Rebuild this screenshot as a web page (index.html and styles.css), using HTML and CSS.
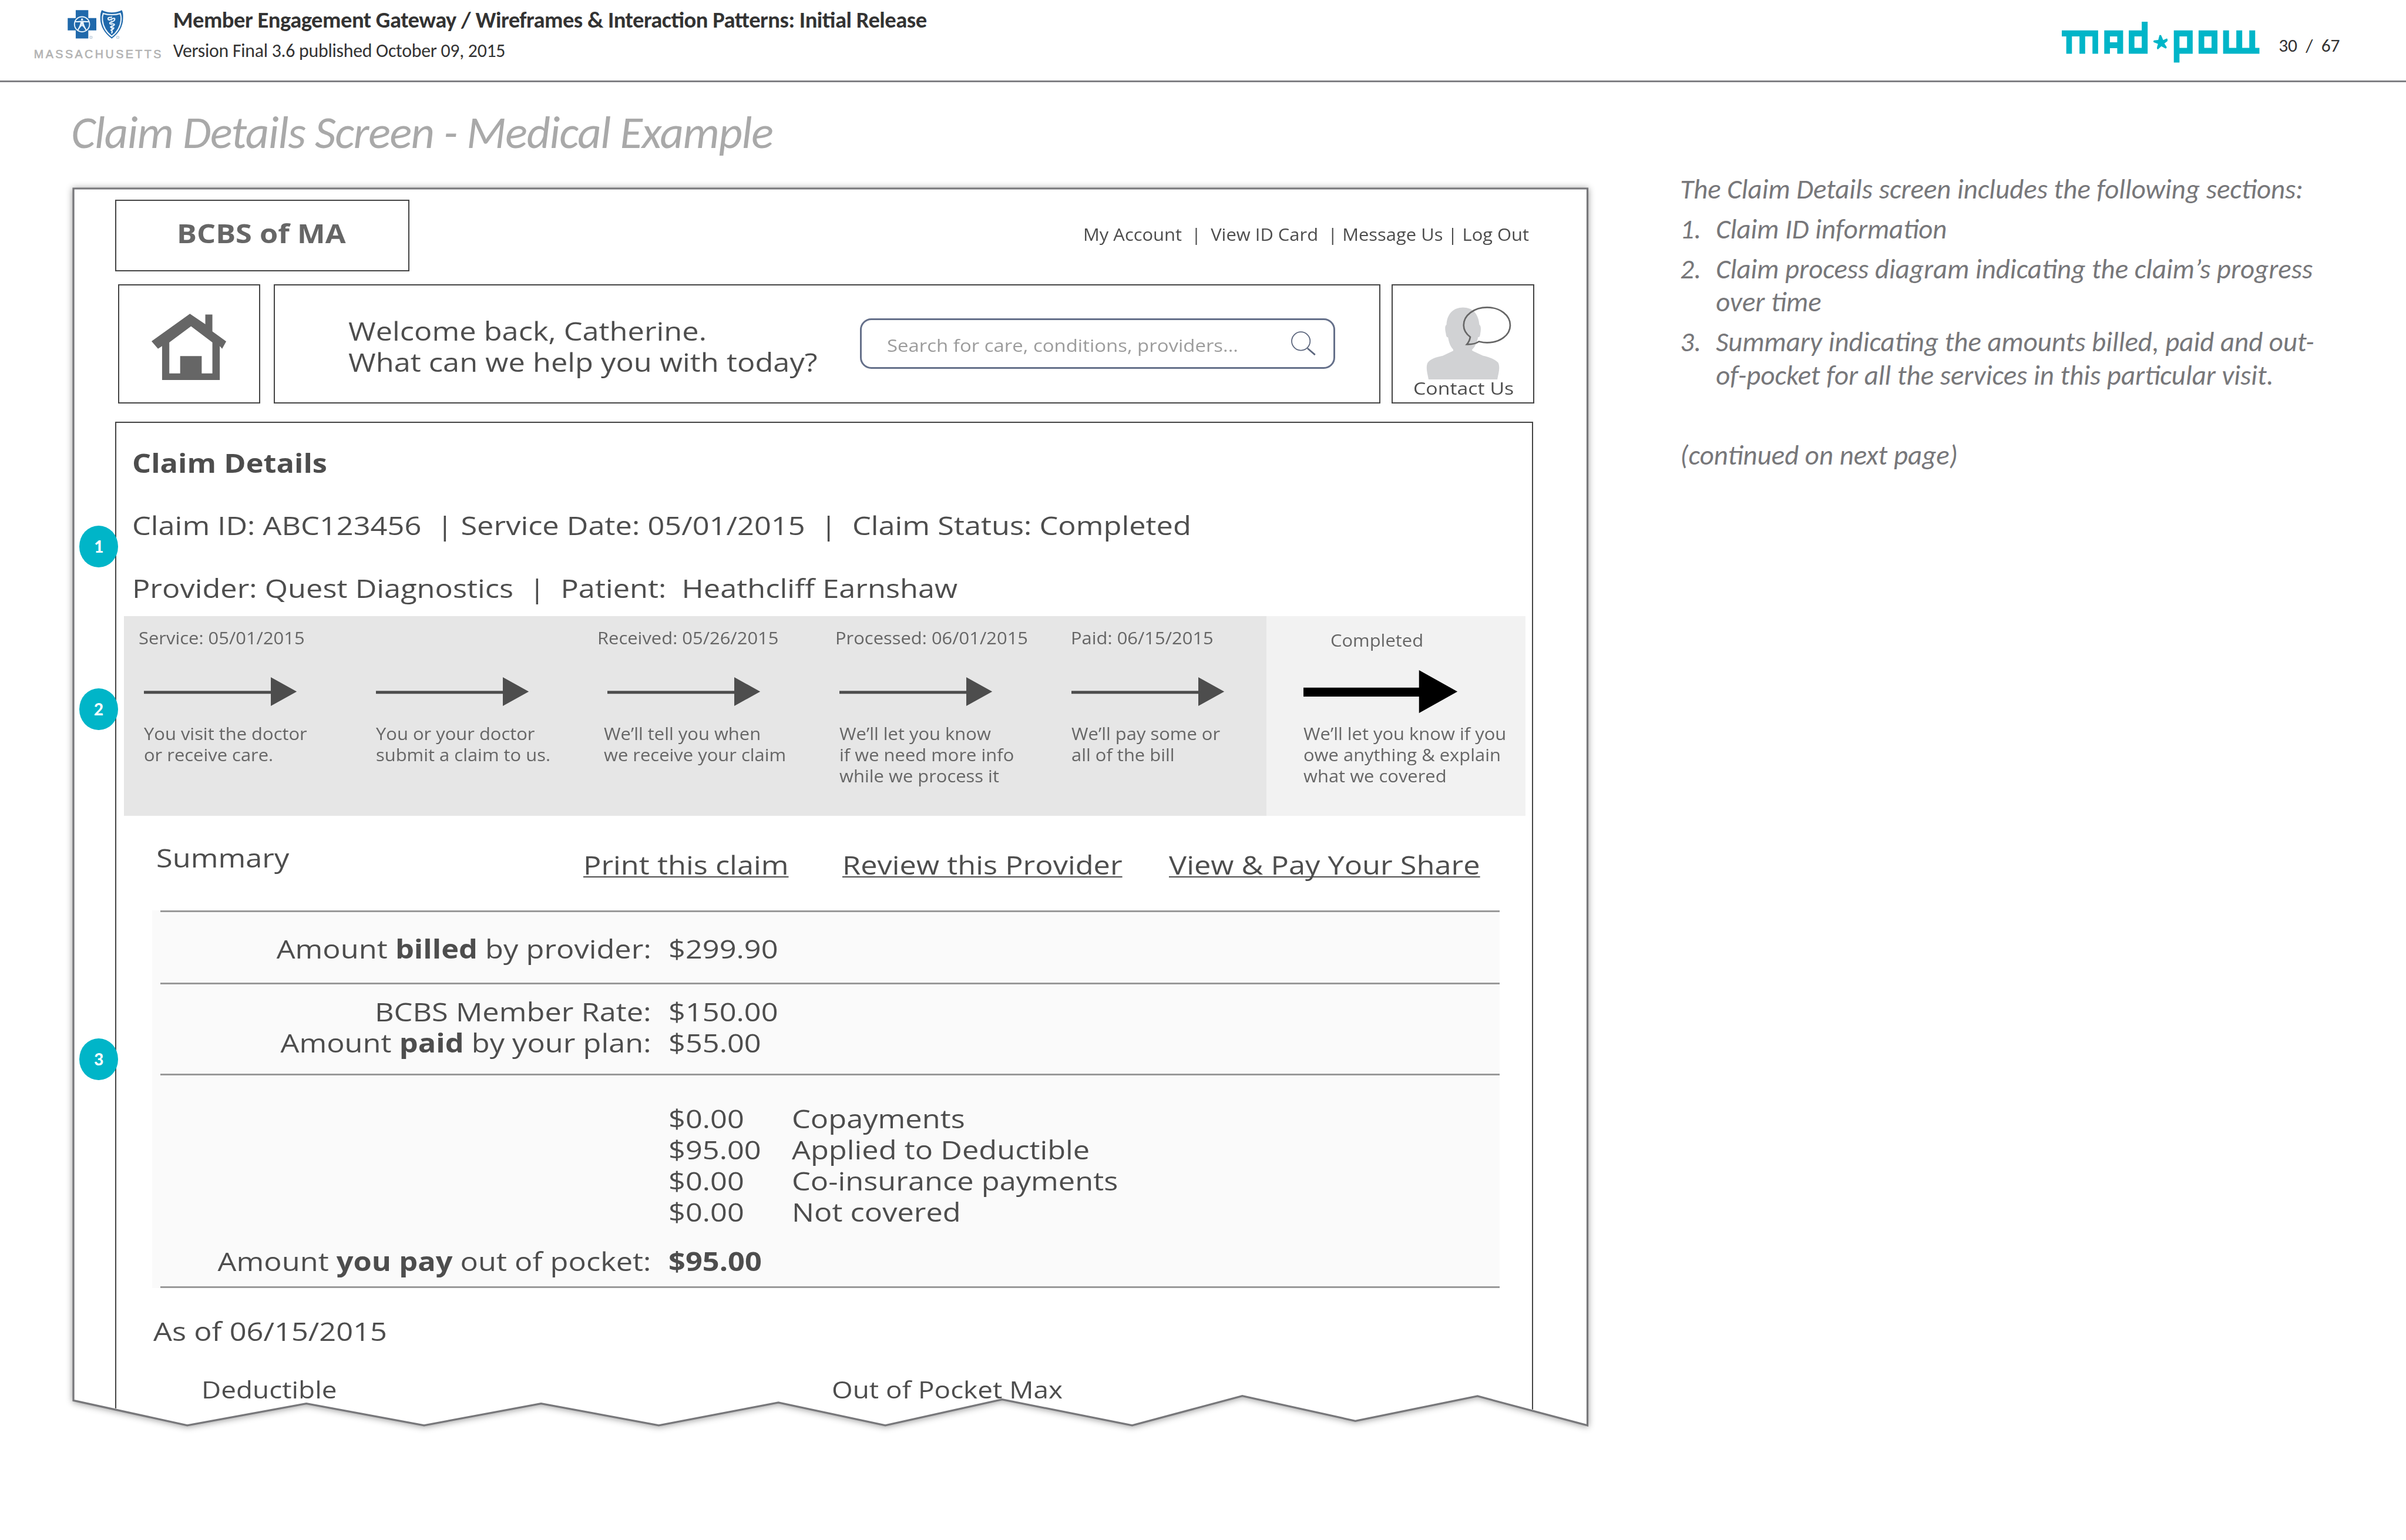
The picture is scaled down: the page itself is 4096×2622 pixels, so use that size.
FILE: index.html
```html
<!DOCTYPE html>
<html lang="en">
<head>
<meta charset="utf-8">
<title>Claim Details Screen - Medical Example</title>
<link rel="stylesheet" href="styles.css">
</head>
<body>
<header class="doc-header">
  <div class="brand">
    <svg class="brand-mark" viewBox="0 0 372 184" aria-label="Blue Cross Blue Shield">
      <path fill="#2069ab" d="M52 1h80v50h51v79h-51v51H52v-51H1V51h51z"/>
      <circle cx="92" cy="91" r="48" fill="none" stroke="#e9f3fa" stroke-width="7"/>
      <path fill="none" stroke="#e9f3fa" stroke-width="8" d="M46 74Q68 76 83 73H101Q116 76 138 74M86 74Q86 98 64 130M98 74Q98 98 120 130M76 112Q92 84 108 112"/>
      <path fill="#e9f3fa" d="M84 72h16l2 26-10-5-10 5z"/>
      <circle cx="92" cy="60" r="7" fill="#e9f3fa"/>
      <path fill="#2069ab" d="M218 1Q246 16 281 16T345 1Q355 14 353 55 351 130 281 182 211 130 208 55 208 14 218 1Z"/>
      <path fill="none" stroke="#e9f3fa" stroke-width="8" d="M227 22Q250 30 281 30T335 22Q343 42 340 67 334 128 281 168 228 128 222 67 219 42 227 22Z"/>
      <path fill="none" stroke="#e9f3fa" stroke-width="8" stroke-linecap="round" stroke-linejoin="round" d="M277 47Q254 45 258 59 264 67 277 60 297 48 300 56 302 70 279 76 262 82 272 89 296 86 298 93 292 103 274 107 272 114 294 114 290 124 276 128 290 136 281 146"/>
      <path fill="none" stroke="#e9f3fa" stroke-width="3" d="M281 38V150"/>
      <path fill="none" stroke="#9db4c8" stroke-width="3" d="M142 168h14v12h-14zM313 168h14v12h-14z"/>
    </svg>
    <div class="brand-state">MASSACHUSETTS</div>
  </div>
  <div class="doc-info">
    <div class="doc-name">Member Engagement Gateway / Wireframes &amp; Interaction Patterns: Initial Release</div>
    <div class="doc-version">Version Final 3.6 published October 09, 2015</div>
  </div>
  <svg class="agency-logo" viewBox="0 0 420 87" aria-label="mad pow" fill="#00b5c8">
    <path d="M0 18.500h77v49.500h-12V31H49.500v37h-12V31H21.500v37H9.500V31H0z"/>
    <path fill-rule="evenodd" d="M90 18.500h40V68h-12.500V56h-15.500v12H90zM102 31v12.500h15.500V31z"/>
    <path fill-rule="evenodd" d="M142 18.500h27.500V0h12.500v68h-40zM154 31v24.500h15.500V31z"/>
    <path d="M207 28.500Q209.500 27 211 29.500L215 39 222.500 35.500Q225 36 224 41L217.500 46 222.500 54Q222.500 58 218.500 56L211 52 204 58.500Q201 58.500 202 53.500L204 47 195 43.500Q193 41 195.500 39.500L204.500 38.500Z"/>
    <path fill-rule="evenodd" d="M237.500 18.500h40V68h-28v18.500h-12zM249.500 31v24.500h16V31z"/>
    <path fill-rule="evenodd" d="M290 18.500h40V68h-40zM302 31v24.500h15.500V31z"/>
    <path d="M342 18.500h12.500v37H370v-37h12.500v37H397.500v-37h12.500v37h9V68h-77z"/>
  </svg>
  <div class="page-number">30&nbsp; /&nbsp; 67</div>
</header>

<h1 class="screen-title">Claim Details Screen - Medical Example</h1>

<div class="columns">
  <section class="sheet">
    <svg class="sheet-paper" viewBox="0 0 3209.3 2622.500">
      <path d="M0 0H3209.300V2622L2976.300 2560 2717.300 2612.600 2477.700 2559.600 2244.300 2622 1968.300 2567 1721 2622 1494.300 2573.600 1240.800 2622 991.300 2575.600 743.300 2622 493.800 2575.600 241.300 2622 0 2569.200Z"/>
    </svg>
    <div class="screen">
      <div class="topbar">
        <div class="site-name"><span class="wide">BCBS of MA</span></div>
        <nav class="account-nav">My Account&nbsp; |&nbsp; View ID Card&nbsp; | Message Us | Log Out</nav>
      </div>
      <div class="masthead">
        <div class="home">
          <svg viewBox="219 210 475 424" fill="#666"><path fill-rule="evenodd" d="M463 211L561 277V216H606V323L694 387 668 433 653 416V633H286V416L260 433 219 386ZM470 290L332 393V590H401V480H538V590H606V393Z"/></svg>
        </div>
        <div class="welcome">
          <p class="greeting wide">Welcome back, Catherine.<br>What can we help you with today?</p>
          <div class="search">
            <span class="search-hint">Search for care, conditions, providers...</span>
            <svg class="search-icon" viewBox="0 0 54 52" fill="none" stroke="#5c667d"><circle cx="22" cy="21" r="19.500" stroke-width="2.200"/><path d="M36 36L52 50" stroke-width="3.400"/></svg>
          </div>
        </div>
        <div class="contact">
          <svg viewBox="250 165 542 468">
            <path fill="#d1d2d4" d="M484 174C545 174 583 215 588 285 597 287 600 310 594 340 592 360 588 364 580 363 572 400 560 425 541 443Q541 448 546 451L610 481C660 493 690 505 707 525 722 555 710 590 702 633H265C257 590 245 555 260 525 280 500 310 492 355 482L420 451Q424 448 420 440C402 420 394 395 389 365 380 364 377 358 375 340 368 310 369 290 379 284 382 215 423 174 484 174Z"/>
            <path fill="none" stroke="#666" stroke-width="10" d="M530 362C505 343 488 315 488 287 488 223 555 174 637 174 719 174 784 223 784 287 784 350 719 398 637 398 619 398 602 395 585 391 565 405 545 410 508 409 521 395 527 380 530 362Z"/>
          </svg>
          <span class="contact-label">Contact Us</span>
        </div>
      </div>

      <div class="details">
        <div class="claim-info wide">
          <h2>Claim Details</h2>
          <p>Claim ID: ABC123456&nbsp; | Service Date: 05/01/2015&nbsp; |&nbsp; Claim Status: Completed</p>
          <p>Provider: Quest Diagnostics&nbsp; |&nbsp; Patient:&nbsp; Heathcliff Earnshaw</p>
        </div>

        <div class="process">
          <div class="step">
            <div class="step-date service">Service: 05/01/2015</div>
            <svg class="arrow" viewBox="0 0 330 91"><path d="M0 44H269V15L324 45.500 269 76V50H0z"/></svg>
            <div class="step-note">You visit the doctor<br>or receive care.</div>
          </div>
          <div class="step">
            <div class="step-date">&nbsp;</div>
            <svg class="arrow" viewBox="0 0 330 91"><path d="M0 44H269V15L324 45.500 269 76V50H0z"/></svg>
            <div class="step-note">You or your doctor<br>submit a claim to us.</div>
          </div>
          <div class="step">
            <div class="step-date received">Received: 05/26/2015</div>
            <svg class="arrow shifted" viewBox="0 0 330 91"><path d="M0 44H269V15L324 45.500 269 76V50H0z"/></svg>
            <div class="step-note">We’ll tell you when<br>we receive your claim</div>
          </div>
          <div class="step">
            <div class="step-date processed">Processed: 06/01/2015</div>
            <svg class="arrow" viewBox="0 0 330 91"><path d="M0 44H269V15L324 45.500 269 76V50H0z"/></svg>
            <div class="step-note">We’ll let you know<br>if we need more info<br>while we process it</div>
          </div>
          <div class="step">
            <div class="step-date paid">Paid: 06/15/2015</div>
            <svg class="arrow" viewBox="0 0 330 91"><path d="M0 44H269V15L324 45.500 269 76V50H0z"/></svg>
            <div class="step-note">We’ll pay some or<br>all of the bill</div>
          </div>
          <div class="step current">
            <div class="step-date completed">Completed</div>
            <svg class="arrow" viewBox="0 0 330 91"><path d="M0 37H245V0L326.400 45.500 245 91V56H0z"/></svg>
            <div class="step-note">We’ll let you know if you<br>owe anything &amp; explain<br>what we covered</div>
          </div>
        </div>

        <div class="summary-head">
          <h3><span class="wide">Summary</span></h3>
          <a class="print"><span class="wide">Print this claim</span></a>
          <a class="review"><span class="wide">Review this Provider</span></a>
          <a class="pay"><span class="wide">View &amp; Pay Your Share</span></a>
        </div>

        <div class="amounts">
          <div class="amount-row billed">
            <span class="label wide">Amount <b>billed</b> by provider:</span><span class="value wide">$299.90</span>
          </div>
          <div class="amount-row paid-row">
            <span class="label wide">BCBS Member Rate:</span><span class="value wide">$150.00</span>
            <span class="label wide">Amount <b>paid</b> by your plan:</span><span class="value wide">$55.00</span>
          </div>
          <div class="amount-row pocket">
            <span class="value wide">$0.00</span><span class="kind wide">Copayments</span>
            <span class="value wide">$95.00</span><span class="kind wide">Applied to Deductible</span>
            <span class="value wide">$0.00</span><span class="kind wide">Co-insurance payments</span>
            <span class="value wide">$0.00</span><span class="kind wide">Not covered</span>
            <span class="label total wide">Amount <b>you pay</b> out of pocket:</span><span class="value total wide"><b>$95.00</b></span>
          </div>
        </div>

        <p class="as-of"><span class="wide">As of 06/15/2015</span></p>
        <div class="meters">
          <span class="meter"><span class="wide">Deductible</span></span>
          <span class="meter"><span class="wide">Out of Pocket Max</span></span>
        </div>
      </div>
    </div>
    <span class="callout one">1</span>
    <span class="callout two">2</span>
    <span class="callout three">3</span>
  </section>

  <aside class="notes">
    <p>The Claim Details screen includes the following sections:</p>
    <ol>
      <li><span>1.</span><span>Claim ID information</span></li>
      <li><span>2.</span><span>Claim process diagram indicating the claim’s progress<br>over time</span></li>
      <li><span>3.</span><span>Summary indicating the amounts billed, paid and out-<br>of-pocket for all the services in this particular visit.</span></li>
    </ol>
    <p class="continued">(continued on next page)</p>
  </aside>
</div>
</body>
</html>
```
FILE: styles.css
```css
/* 1rem = 100 units of the 5100-unit wide page */
html { font-size: 80.3137px; }
* { box-sizing: border-box; margin: 0; padding: 0; }
body {
  width: 51rem;
  height: 32.65rem;
  overflow: hidden;
  background: #fff;
  color: #4d4d4d;
  font: 0.553rem/0.662rem "Open Sans", "Noto Sans", sans-serif;
}
svg { display: block; flex: none; }
h1, h2, h3 { font-size: inherit; font-weight: inherit; }

/* Wireframe lettering is set slightly extended */
.wide {
  display: inline-block;
  vertical-align: top;
  white-space: nowrap;
  transform: scaleX(1.138);
  transform-origin: 0 50%;
}

/* Document header */
.doc-header {
  display: flex;
  align-items: flex-start;
  height: 1.74rem;
  border-bottom: 0.0374rem solid #808084;
  font-family: Carlito, Lato, sans-serif;
  color: #333;
  white-space: nowrap;
}
.brand { width: 2.95rem; padding-top: 0.217rem; margin-left: 0.72rem; }
.brand-mark { width: 1.24rem; height: 0.6133rem; margin-left: 0.71rem; }
.brand-state {
  margin-top: 0.165rem;
  font: 0.245rem/0.3rem "Liberation Sans", Arial, sans-serif;
  -webkit-text-stroke: 0.008rem #b3b3b3;
  letter-spacing: 0.0435rem;
  color: #b3b3b3;
}
.doc-info { width: 40.03rem; font-feature-settings: "liga" 1; }
.doc-name { font-size: 0.481rem; font-weight: 700; line-height: 0.6rem; margin-top: 0.125rem; letter-spacing: -0.0063rem; }
.doc-version { font-size: 0.396rem; line-height: 0.5rem; margin-top: 0.11rem; letter-spacing: -0.0032rem; }
.agency-logo { width: 4.2rem; height: 0.87rem; margin-top: 0.46rem; }
.page-number { font-size: 0.392rem; line-height: 0.5rem; margin: 0.705rem 0 0 0.4rem; }

.screen-title {
  margin: 0.465rem 0 0 1.51rem;
  font: italic 0.98rem/1.2rem Carlito, Lato, sans-serif;
  font-feature-settings: "liga" 1;
  letter-spacing: -0.0168rem;
  color: #a9a9a9;
  white-space: nowrap;
}

.columns { display: flex; margin-top: 0.589rem; }

/* Torn wireframe sheet */
.sheet { position: relative; width: 32.093rem; height: 26.225rem; margin-left: 1.557rem; }
.sheet-paper {
  position: absolute;
  inset: 0;
  width: 100%;
  height: 100%;
  overflow: visible;
  fill: #fff;
  stroke: #77777a;
  stroke-width: 4;
  filter: drop-shadow(0 0.02rem 0.07rem rgba(0, 0, 0, 0.4));
}
.screen {
  position: relative;
  height: 100%;
  padding: 0.24rem 1.1rem 0 0.88rem;
  clip-path: polygon(0.02rem 0.02rem, 32.07rem 0.02rem, 32.07rem 26.19rem, 29.763rem 25.575rem, 27.173rem 26.1rem, 24.777rem 25.575rem, 22.443rem 26.195rem, 19.683rem 25.65rem, 17.21rem 26.195rem, 14.943rem 25.71rem, 12.408rem 26.195rem, 9.913rem 25.73rem, 7.433rem 26.195rem, 4.938rem 25.73rem, 2.413rem 26.195rem, 0.02rem 25.67rem);
}
.topbar { display: flex; justify-content: space-between; height: 1.52rem; }
.site-name {
  width: 6.245rem;
  padding: 0.355rem 0 0 1.29rem;
  border: 0.03rem solid #444;
  color: #666;
  font-weight: 700;
}
.account-nav {
  width: 9.59rem;
  margin-top: 0.506rem;
  font-size: 0.37rem;
  line-height: 0.444rem;
  white-space: nowrap;
  transform: scaleX(1.041);
  transform-origin: 0 50%;
}

.masthead { display: flex; height: 2.525rem; margin: 0.276rem 0 0 0.062rem; }
.home, .welcome, .contact { border: 0.03rem solid #444; }
.home { width: 3.02rem; margin-right: 0.278rem; padding: 0.595rem 0 0 0.69rem; }
.home svg { width: 1.583rem; height: 1.413rem; }
.welcome { display: flex; justify-content: space-between; width: 23.465rem; margin-right: 0.24rem; padding-left: 1.565rem; }
.greeting { padding-top: 0.635rem; }
.search {
  display: flex;
  width: 10.07rem;
  height: 1.08rem;
  margin: 0.69rem 0.94rem 0 0;
  padding-left: 0.535rem;
  border: 0.04rem solid #65708a;
  border-radius: 0.24rem;
}
.search-hint {
  width: 8.56rem;
  margin-top: 0.318rem;
  font-size: 0.37rem;
  line-height: 0.444rem;
  color: #9c9c9c;
  white-space: nowrap;
  transform: scaleX(1.109);
  transform-origin: 0 50%;
}
.search-icon { width: 0.54rem; height: 0.52rem; margin-top: 0.245rem; }
.contact { width: 3.02rem; padding: 0.435rem 0 0 0.43rem; }
.contact svg { width: 1.807rem; height: 1.56rem; margin-left: 0.27rem; }
.contact-label {
  display: block;
  margin-top: -0.042rem;
  font-size: 0.37rem;
  line-height: 0.444rem;
  white-space: nowrap;
  transform: scaleX(1.14);
  transform-origin: 0 50%;
}

/* Claim details panel */
.details { height: 22rem; margin: 0.385rem 0.055rem 0 0; border: 0.03rem solid #444; border-bottom: 0; }
.claim-info { display: block; height: 4.1rem; padding: 0.19rem 0 0 0.295rem; line-height: 1.322rem; }
.claim-info h2 { font-weight: 700; }

.process {
  display: grid;
  grid-template-columns: 4.92rem 4.84rem 4.99rem 4.91rem 4.145rem 5.485rem;
  width: 29.704rem;
  height: 4.23rem;
  margin-left: 0.17rem;
  padding-left: 0.414rem;
  background: #e6e6e6;
  color: #666;
  font-size: 0.37rem;
  line-height: 0.444rem;
  white-space: nowrap;
}
.step { padding-top: 0.24rem; }
.step.current { padding: 0.288rem 0 0 0.78rem; background: #f2f2f2; }
.step-date, .step-note { transform: scaleX(1.041); transform-origin: 0 50%; }
.service { margin-left: -0.11rem; }
.received { margin-left: -0.14rem; }
.processed { margin-left: -0.095rem; }
.paid { margin-left: -0.005rem; }
.completed { margin-left: 0.575rem; }
.arrow { width: 3.3rem; height: 0.91rem; margin: 0.457rem 0 0.217rem; fill: #4d4d4d; }
.arrow.shifted { margin-left: 0.075rem; }
.current .arrow { margin-top: 0.409rem; fill: #000; }

.summary-head {
  display: grid;
  grid-template-columns: 9.055rem 5.486rem 6.925rem 1fr;
  height: 2.01rem;
  padding: 0.56rem 0 0 0.85rem;
}
.summary-head a { padding-top: 0.15rem; }
.summary-head a .wide {
  text-decoration: underline;
  text-decoration-thickness: 0.026rem;
  text-decoration-skip-ink: none;
  text-underline-offset: 0.032rem;
}

.amounts { width: 28.556rem; margin-left: 0.767rem; padding-left: 0.165rem; background: #fafafa; }
.amount-row {
  display: grid;
  grid-template-columns: 10.405rem 2.985rem 1fr;
  align-content: start;
  border-top: 0.0374rem solid #999;
}
.amount-row .label { grid-column: 1; justify-self: end; transform-origin: 100% 50%; }
.amount-row .value { grid-column: 2; margin-left: 0.365rem; }
.amount-row .kind { grid-column: 3; }
.billed { height: 1.53rem; padding-top: 0.45rem; }
.paid-row { height: 1.93rem; padding-top: 0.245rem; }
.pocket { height: 4.54rem; padding-top: 0.58rem; border-bottom: 0.0374rem solid #999; }
.pocket .total { margin-top: 0.38rem; }

.as-of { height: 1.855rem; padding: 0.59rem 0 0 0.785rem; }
.meters {
  display: grid;
  grid-template-columns: 13.36rem 1fr;
  padding-left: 1.81rem;
  font-size: 0.502rem;
  line-height: 0.6rem;
}

.callout {
  position: absolute;
  left: 0.125rem;
  width: 0.816rem;
  height: 0.88rem;
  border-radius: 50%;
  background: #00b5c8;
  color: #fff;
  font: 700 0.4rem/0.88rem Carlito, Lato, sans-serif;
  text-align: center;
}
.callout.one { top: 7.15rem; }
.callout.two { top: 10.6rem; }
.callout.three { top: 18.02rem; }

/* Annotation column */
.notes {
  margin: -0.33rem 0 0 1.965rem;
  font: italic 0.584rem/0.7rem Carlito, Lato, sans-serif;
  color: #77777a;
  white-space: nowrap;
}
.notes ol { list-style: none; }
.notes li { display: flex; margin-top: 0.146rem; }
.notes li span:first-child { width: 0.757rem; }
.continued { margin-top: 1.0rem; }
```
